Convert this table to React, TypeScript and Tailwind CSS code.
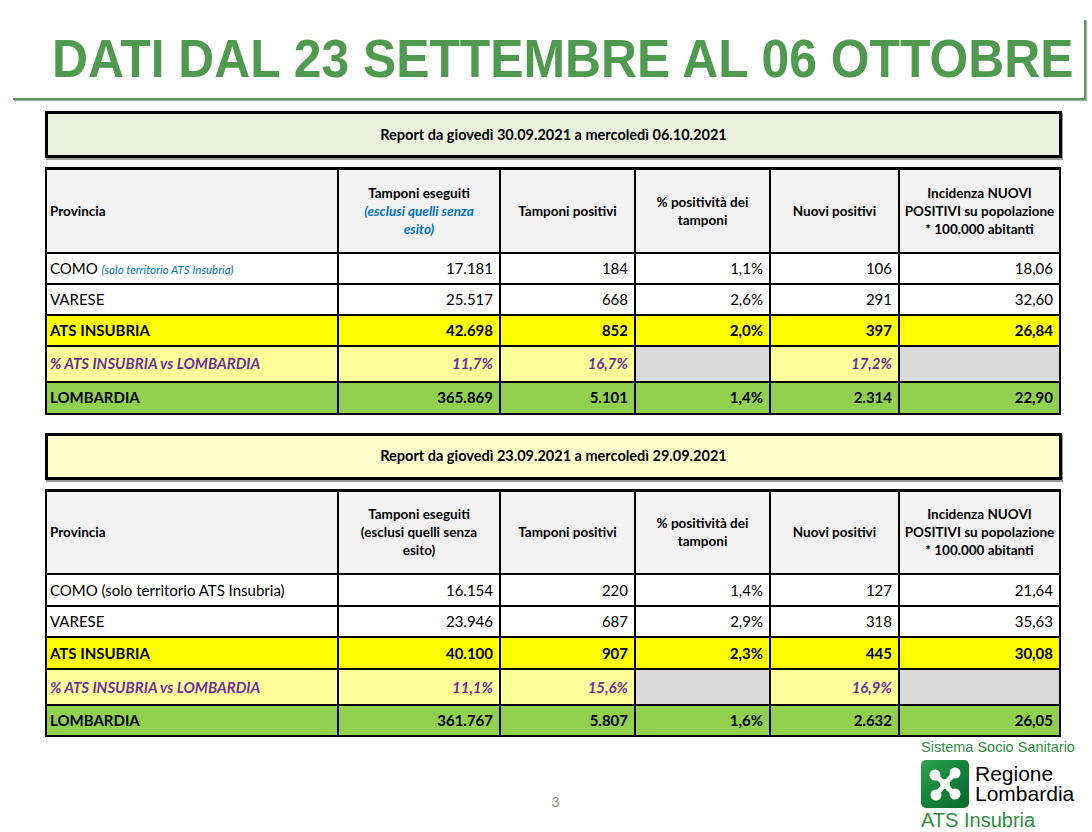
import React from 'react';

type Row = {
  label: React.ReactNode;
  values: (string | null)[];
  kind: 'plain' | 'ats' | 'pct' | 'lomb';
  h: string;
};

interface ReportProps {
  title: string;
  titleBg: string;
  italicHeader: boolean;
  rows: Row[];
}

const font = { fontFamily: 'Lato, "Open Sans", "Liberation Sans", sans-serif' };

const cols = ['w-[292px]', 'w-[162px]', 'w-[135px]', 'w-[135px]', 'w-[129px]', 'w-[161px]'];

function rowClasses(kind: Row['kind']) {
  if (kind === 'ats') return 'bg-[#ffff00] font-bold text-black';
  if (kind === 'pct') return 'bg-[#ffff99] font-bold italic text-[#7030a0]';
  if (kind === 'lomb') return 'bg-[#92d050] font-bold text-black';
  return 'bg-white text-black';
}

function ReportTable({ title, titleBg, italicHeader, rows }: ReportProps) {
  return (
    <div className="flex flex-col">
      <div
        className={`h-[47px] border-[3px] border-black ${titleBg} flex items-center justify-center text-[14.5px] font-bold text-black shadow-[1px_2px_0_#9a9a9a]`}
      >
        {title}
      </div>
      <table className="mt-[9px] w-[1016px] border-collapse table-fixed">
        <colgroup>
          {cols.map((c, i) => (
            <col key={i} className={c} />
          ))}
        </colgroup>
        <thead>
          <tr className="h-[84px] bg-[#f2f2f2] text-[13.5px] font-bold leading-[18px] text-black">
            <th className="border-2 border-t-[3px] border-black px-[3px] text-left">Provincia</th>
            <th className="border-2 border-t-[3px] border-black px-2 text-center">
              Tamponi eseguiti
              <br />
              {italicHeader ? (
                <span className="italic text-[#0070c0]">
                  (esclusi quelli senza
                  <br />
                  esito)
                </span>
              ) : (
                <span>
                  (esclusi quelli senza
                  <br />
                  esito)
                </span>
              )}
            </th>
            <th className="border-2 border-t-[3px] border-black px-1 text-center">Tamponi positivi</th>
            <th className="border-2 border-t-[3px] border-black px-1 text-center">
              % positività dei
              <br />
              tamponi
            </th>
            <th className="border-2 border-t-[3px] border-black px-1 text-center">Nuovi positivi</th>
            <th className="border-2 border-t-[3px] border-black px-0 text-center whitespace-nowrap">
              Incidenza NUOVI
              <br />
              POSITIVI su popolazione
              <br />* 100.000 abitanti
            </th>
          </tr>
        </thead>
        <tbody className="text-[15px]">
          {rows.map((r, i) => (
            <tr key={i} className={`${r.h} ${rowClasses(r.kind)}`}>
              <td className="border-2 border-black px-[3px] text-left whitespace-nowrap">{r.label}</td>
              {r.values.map((v, j) => (
                <td
                  key={j}
                  className={`border-2 border-black pr-[6px] text-right ${
                    v === null ? 'bg-[#d9d9d9]' : ''
                  }`}
                >
                  {v}
                </td>
              ))}
            </tr>
          ))}
        </tbody>
      </table>
    </div>
  );
}

function RosaCamuna() {
  return (
    <svg width="48" height="48" viewBox="0 0 48 48">
      <defs>
        <linearGradient id="rlg" x1="0" y1="0" x2="1" y2="1">
          <stop offset="0" stopColor="#2fa64e" />
          <stop offset="0.5" stopColor="#13823a" />
          <stop offset="1" stopColor="#0a6a2b" />
        </linearGradient>
      </defs>
      <rect x="0" y="0" width="48" height="48" rx="5" fill="url(#rlg)" />
      <g fill="none" stroke="#fff" strokeWidth="5" strokeLinecap="round">
        <path d="M14 15 Q19 20 24 24" />
        <path d="M34 13 Q28 19 24 24" />
        <path d="M15 35 Q20 29 24 24" />
        <path d="M34 34 Q28 30 24 24" />
      </g>
      <g fill="#fff">
        <circle cx="14" cy="15" r="5.5" />
        <circle cx="34" cy="13" r="5.5" />
        <circle cx="15" cy="35" r="5.5" />
        <circle cx="34" cy="34" r="5.5" />
        <circle cx="24" cy="24" r="5" />
      </g>
    </svg>
  );
}

const comoItalic = (
  <>
    COMO <span className="text-[11.5px] italic text-[#0070c0]">(solo territorio ATS Insubria)</span>
  </>
);

const weekOne: Row[] = [
  { label: comoItalic, values: ['17.181', '184', '1,1%', '106', '18,06'], kind: 'plain', h: 'h-[31px]' },
  { label: 'VARESE', values: ['25.517', '668', '2,6%', '291', '32,60'], kind: 'plain', h: 'h-[31px]' },
  { label: 'ATS INSUBRIA', values: ['42.698', '852', '2,0%', '397', '26,84'], kind: 'ats', h: 'h-[31px]' },
  { label: '% ATS INSUBRIA vs LOMBARDIA', values: ['11,7%', '16,7%', null, '17,2%', null], kind: 'pct', h: 'h-[36px]' },
  { label: 'LOMBARDIA', values: ['365.869', '5.101', '1,4%', '2.314', '22,90'], kind: 'lomb', h: 'h-[32px]' },
];

const weekTwo: Row[] = [
  { label: 'COMO (solo territorio ATS Insubria)', values: ['16.154', '220', '1,4%', '127', '21,64'], kind: 'plain', h: 'h-[32px]' },
  { label: 'VARESE', values: ['23.946', '687', '2,9%', '318', '35,63'], kind: 'plain', h: 'h-[31px]' },
  { label: 'ATS INSUBRIA', values: ['40.100', '907', '2,3%', '445', '30,08'], kind: 'ats', h: 'h-[32px]' },
  { label: '% ATS INSUBRIA vs LOMBARDIA', values: ['11,1%', '15,6%', null, '16,9%', null], kind: 'pct', h: 'h-[36px]' },
  { label: 'LOMBARDIA', values: ['361.767', '5.807', '1,6%', '2.632', '26,05'], kind: 'lomb', h: 'h-[31px]' },
];

export default function App() {
  return (
    <div className="w-[1092px] h-[832px] overflow-hidden bg-white" style={font}>
      <div className="ml-[13px] w-[1073px] h-[100px] pt-[20px]">
        <div className="h-[80px] border-b-2 border-r-2 border-[#5f955f] shadow-[1px_1px_1px_#9bb89b] pl-[39px] flex items-center overflow-hidden">
          <h1
            className="text-[53px] font-bold leading-none text-[#4f9a4f] whitespace-nowrap pb-[2px] origin-left scale-x-[0.94]"
            style={{ fontFamily: '"Liberation Sans", Arial, sans-serif' }}
          >
            DATI DAL 23 SETTEMBRE AL 06 OTTOBRE
          </h1>
        </div>
      </div>

      <div className="ml-[45px] w-[1017px] mt-[11px] flex flex-col gap-[18px]">
        <ReportTable
          title="Report da giovedì 30.09.2021 a mercoledì 06.10.2021"
          titleBg="bg-[#ebf0df]"
          italicHeader
          rows={weekOne}
        />
        <ReportTable
          title="Report da giovedì 23.09.2021 a mercoledì 29.09.2021"
          titleBg="bg-[#ffffcc]"
          italicHeader={false}
          rows={weekTwo}
        />
      </div>

      <div className="flex">
        <div className="w-[921px] flex justify-center pt-[54px] pl-[190px]">
          <span className="text-[14px] text-[#8c8c8c]">3</span>
        </div>
        <div className="flex flex-col pt-[2px]" style={{ fontFamily: '"Liberation Sans", sans-serif' }}>
          <span className="text-[14.5px] leading-[17px] text-[#2f8f3f] whitespace-nowrap">Sistema Socio Sanitario</span>
          <div className="flex items-center gap-[6px] mt-[4px]">
            <RosaCamuna />
            <div className="flex flex-col text-[21px] leading-[20px] text-black">
              <span>Regione</span>
              <span>Lombardia</span>
            </div>
          </div>
          <span className="text-[20px] leading-[20px] mt-[2px] text-[#2f8f3f] whitespace-nowrap">ATS Insubria</span>
        </div>
      </div>
    </div>
  );
}
